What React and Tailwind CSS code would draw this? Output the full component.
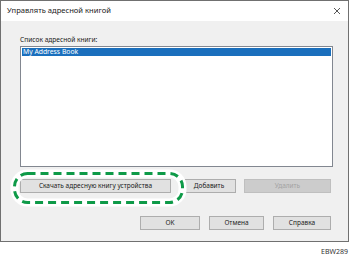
import React from 'react';

function Btn({ children, className = '', disabled = false }) {
  return (
    <div
      className={`flex items-center justify-center border text-[6.5px] leading-none ${
        disabled
          ? 'bg-[#cccccc] border-[#bfbfbf] text-[#a3a3a3]'
          : 'bg-[#e1e1e1] border-[#adadad] text-[#222]'
      } ${className}`}
    >
      {children}
    </div>
  );
}

export default function App() {
  return (
    <div
      className="relative w-[350px] h-[258px] bg-white overflow-hidden"
      style={{ fontFamily: '"Noto Sans", "Open Sans", sans-serif' }}
    >
      {/* Dialog window */}
      <div className="w-[349px] h-[242px] border border-[#707070] flex flex-col">
        <div className="h-[20px] bg-white flex items-center justify-between pl-[6px] pr-[6px]">
          <span className="text-[7.6px] text-[#222]">Управлять адресной книгой</span>
          <svg width="8" height="8" viewBox="0 0 8 8" className="mr-[1px]">
            <path d="M1 1L7 7M7 1L1 7" stroke="#444" strokeWidth="0.9" />
          </svg>
        </div>

        <div className="flex-1 bg-[#f0f0f0] pl-[19px] pr-[15px] pt-[14px]">
          <div className="text-[6.6px] leading-[10px] text-[#222]">Список адресной книги:</div>
          <div className="mt-[1px] h-[121px] w-[313px] border border-[#828790] bg-white p-[1px]">
            <div className="h-[8px] bg-[#1a6fbd] text-white text-[6.8px] leading-[8px] pl-[1px]">
              My Address Book
            </div>
          </div>

          <div className="mt-[12px] flex items-center gap-[11px]">
            <Btn className="w-[151px] h-[14px]">Скачать адресную книгу устройства</Btn>
            <Btn className="w-[54px] h-[14px]">Добавить</Btn>
            <Btn className="w-[87px] h-[14px] ml-[-3px]" disabled>Удалить</Btn>
          </div>

          <div className="mt-[23px] flex justify-end gap-[9px] pr-[2px]">
            <Btn className="w-[60px] h-[14px]">OK</Btn>
            <Btn className="w-[55px] h-[14px]">Отмена</Btn>
            <Btn className="w-[58px] h-[14px]">Справка</Btn>
          </div>
        </div>
      </div>

      <div className="flex justify-end pr-[2px] pt-[6px] text-[7px] leading-none text-[#333]">EBW289</div>

      {/* Callout around the download button */}
      <svg className="absolute left-0 top-0 pointer-events-none" width="350" height="258">
        <rect x="14.5" y="173.5" width="168" height="29" rx="13" fill="none" stroke="#fff" strokeWidth="8" />
        <rect x="14.5" y="173.5" width="168" height="29" rx="13" fill="none" stroke="#0e9a48" strokeWidth="3" strokeDasharray="8 5" />
      </svg>
    </div>
  );
}
